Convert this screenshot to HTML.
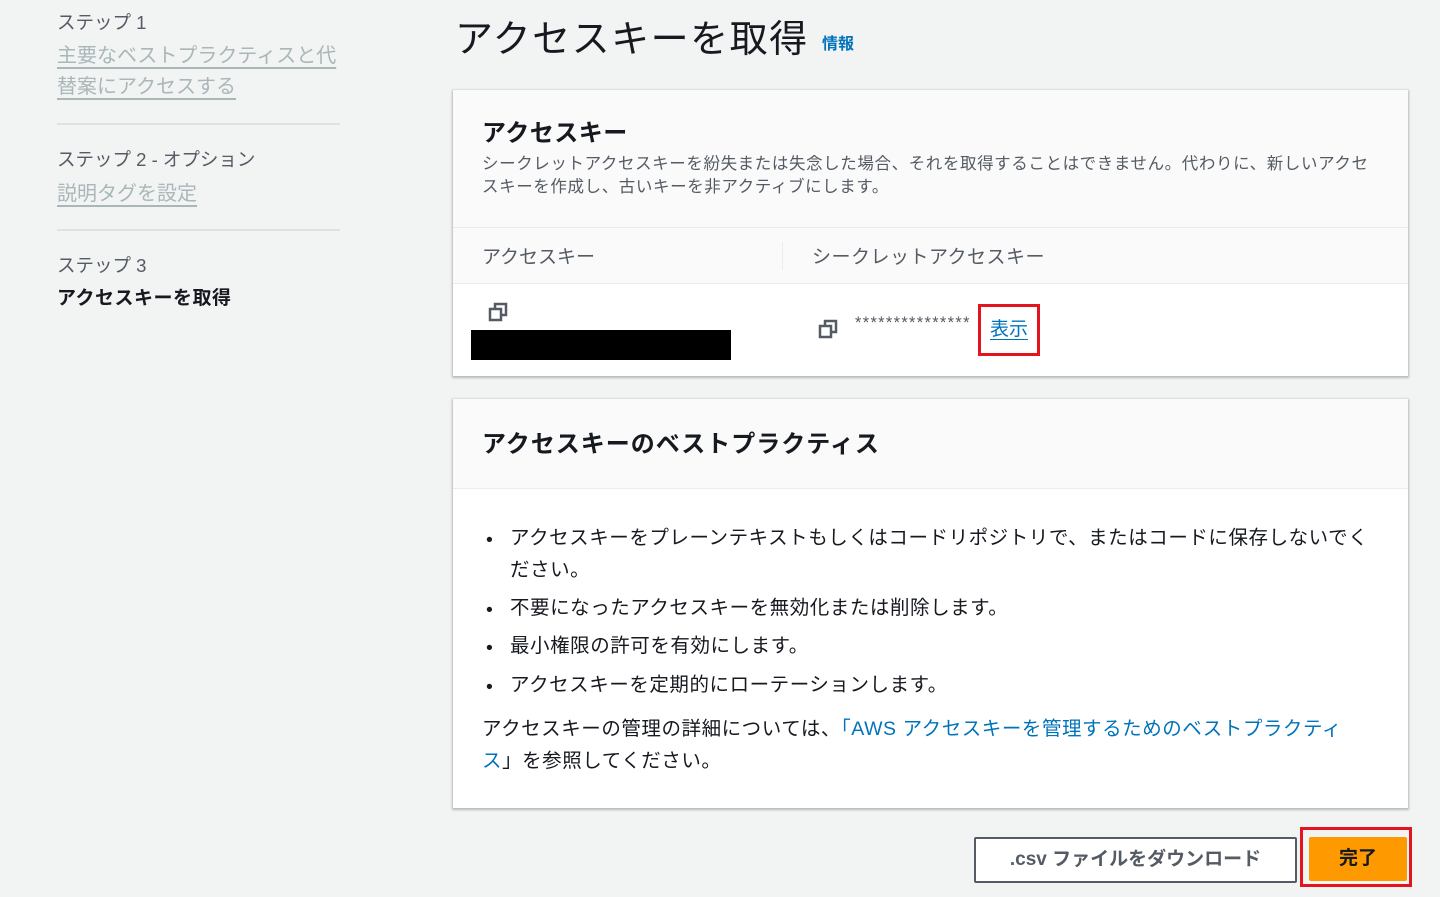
<!DOCTYPE html>
<html><head><meta charset="utf-8"><style>
*{margin:0;padding:0;box-sizing:border-box}
body{width:1440px;height:897px;background:#f2f3f3;font-family:"Liberation Sans","Noto Sans CJK JP",sans-serif;color:#16191f;position:relative;overflow:hidden}
.a{position:absolute;white-space:nowrap}
.side{color:#545b64;font-size:18.5px}
.lnk{color:#aab7b8;font-size:20px;text-decoration:underline;text-decoration-color:#aab7b8;text-underline-offset:5px}
.hr{position:absolute;left:57px;width:283px;height:2px;background:#dde2e2}
.panel{position:absolute;left:453px;width:955px;background:#fff;box-shadow:0 1px 2px 1px rgba(0,22,40,.25)}
.blue{color:#0073bb}
</style></head><body>
<div class="a side" style="left:57px;top:9px">ステップ 1</div>
<div class="a lnk" style="left:57px;top:39px">主要なベストプラクティスと代</div>
<div class="a lnk" style="left:57px;top:70px">替案にアクセスする</div>
<div class="hr" style="top:123px"></div>
<div class="a side" style="left:57px;top:146px">ステップ 2 - オプション</div>
<div class="a lnk" style="left:57px;top:177px">説明タグを設定</div>
<div class="hr" style="top:229px"></div>
<div class="a side" style="left:57px;top:252px">ステップ 3</div>
<div class="a" style="left:57px;top:283px;font-size:19px;font-weight:bold;letter-spacing:.5px">アクセスキーを取得</div>

<div class="a" style="left:455px;top:8px;font-size:38px;letter-spacing:1.5px;color:#16191f">アクセスキーを取得</div>
<div class="a blue" style="left:822px;top:30px;font-size:16px;font-weight:bold">情報</div>

<div class="panel" style="top:90px;height:286px">
 <div style="height:138px;background:#fafafa;border-bottom:1px solid #eaeded;position:relative">
  <div class="a" style="left:29px;top:23px;font-size:24px;font-weight:bold;letter-spacing:.5px">アクセスキー</div>
  <div class="a" style="left:29px;top:63px;font-size:16.5px;color:#545b64;line-height:23px;white-space:normal;width:890px;letter-spacing:.6px">シークレットアクセスキーを紛失または失念した場合、それを取得することはできません。代わりに、新しいアクセスキーを作成し、古いキーを非アクティブにします。</div>
 </div>
 <div style="height:56px;background:#fafafa;border-bottom:1px solid #eaeded;position:relative">
  <div class="a" style="left:29px;top:14px;font-size:19px;color:#545b64">アクセスキー</div>
  <div style="position:absolute;left:329px;top:14px;width:1px;height:28px;background:#eaeded"></div>
  <div class="a" style="left:359px;top:14px;font-size:19px;color:#545b64;letter-spacing:.5px">シークレットアクセスキー</div>
 </div>
 <div style="position:relative;height:91px">
  <svg class="a" style="left:35px;top:18px" width="20" height="20" viewBox="0 0 20 20" fill="none" stroke="#545b64" stroke-width="2.5"><rect x="2" y="7" width="11" height="11"/><path d="M7 6V2h11v11h-4"/></svg>
  <div class="a" style="left:18px;top:46px;width:260px;height:30px;background:#000"></div>
  <svg class="a" style="left:365px;top:35px" width="20" height="20" viewBox="0 0 20 20" fill="none" stroke="#545b64" stroke-width="2.5"><rect x="2" y="7" width="11" height="11"/><path d="M7 6V2h11v11h-4"/></svg>
  <div class="a" style="left:402px;top:30px;font-size:16.5px;color:#545b64;letter-spacing:1.3px">***************</div>
  <div class="a" style="left:525px;top:20px;width:62px;height:52px;border:3px solid #e3141e"></div>
  <div class="a blue" style="left:537px;top:30px;font-size:19px;text-decoration:underline;text-underline-offset:4px">表示</div>
 </div>
</div>

<div class="panel" style="top:399px;height:409px">
 <div style="height:90px;background:#fafafa;border-bottom:1px solid #eaeded;position:relative">
  <div class="a" style="left:29px;top:25px;font-size:24px;font-weight:bold;letter-spacing:1px">アクセスキーのベストプラクティス</div>
 </div>
 <div style="position:relative;font-size:19.5px;color:#16191f;letter-spacing:.55px">
  <div class="a" style="left:33px;top:40px">•</div><div class="a" style="left:57px;top:32px">アクセスキーをプレーンテキストもしくはコードリポジトリで、またはコードに保存しないでく</div>
  <div class="a" style="left:57px;top:64px">ださい。</div>
  <div class="a" style="left:33px;top:110px">•</div><div class="a" style="left:57px;top:102px">不要になったアクセスキーを無効化または削除します。</div>
  <div class="a" style="left:33px;top:148px">•</div><div class="a" style="left:57px;top:140px">最小権限の許可を有効にします。</div>
  <div class="a" style="left:33px;top:187px">•</div><div class="a" style="left:57px;top:179px">アクセスキーを定期的にローテーションします。</div>
  <div class="a" style="left:29px;top:223px">アクセスキーの管理の詳細については、<span class="blue">「AWS アクセスキーを管理するためのベストプラクティ</span></div>
  <div class="a" style="left:29px;top:255px"><span class="blue">ス</span>」を参照してください。</div>
 </div>
</div>

<div class="a" style="left:974px;top:837px;width:323px;height:46px;background:#fff;border:2px solid #545b64;border-radius:2px;font-size:19px;font-weight:bold;color:#545b64;text-align:center;line-height:42px">.csv ファイルをダウンロード</div>
<div class="a" style="left:1300px;top:827px;width:112px;height:60px;border:3px solid #e3141e"></div>
<div class="a" style="left:1309px;top:837px;width:98px;height:44px;background:#ff9900;border-radius:2px;font-size:19px;font-weight:bold;text-align:center;line-height:44px">完了</div>
</body></html>
